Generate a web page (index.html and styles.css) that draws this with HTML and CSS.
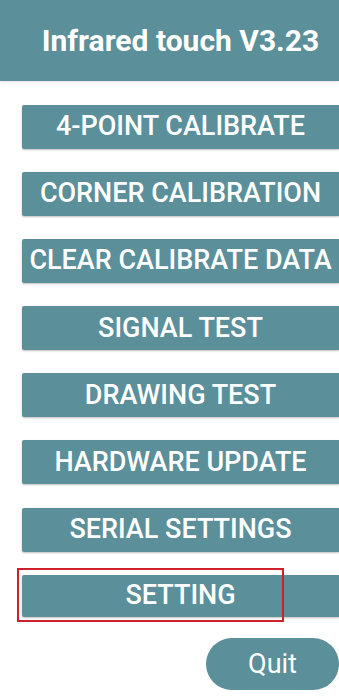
FILE: index.html
```html
<!DOCTYPE html>
<html lang="en">
<head>
    <meta charset="UTF-8">
    <meta name="viewport" content="width=device-width, initial-scale=1.0">
    <title>Infrared touch</title>
    <link rel="stylesheet" href="styles.css">
</head>
<body>
    <div class="header">
        <h1>Infrared touch V3.23</h1>
    </div>

    <div class="menu">
        <button class="menu-btn">4-POINT CALIBRATE</button>
        <button class="menu-btn">CORNER CALIBRATION</button>
        <button class="menu-btn">CLEAR CALIBRATE DATA</button>
        <button class="menu-btn">SIGNAL TEST</button>
        <button class="menu-btn">DRAWING TEST</button>
        <button class="menu-btn">HARDWARE UPDATE</button>
        <button class="menu-btn">SERIAL SETTINGS</button>
        <div class="highlight-wrap">
            <button class="menu-btn last">SETTING</button>
            <span class="highlight"></span>
        </div>
    </div>

    <div class="footer">
        <button class="quit-btn">Quit</button>
    </div>
</body>
</html>
```

FILE: styles.css
```css
body {
    font-family: Roboto, "Noto Sans", Arial, sans-serif;
    background-color: #ffffff;
    margin: 0;
    width: 339px;
    overflow: hidden;
}
.header {
    height: 81px;
    background-color: #5b8f9a;
    display: flex;
    align-items: center;
    justify-content: center;
    padding-left: 22px;
    box-shadow: 0 1px 2px rgba(0, 0, 0, 0.12);
}
.header h1 {
    margin: 0;
    color: #ffffff;
    font-size: 30px;
    font-weight: 700;
    line-height: 1;
}
.menu {
    display: flex;
    flex-direction: column;
    gap: 23.2px;
    padding: 23.5px 0 0 22px;
}
.menu-btn {
    display: block;
    width: 100%;
    height: 44px;
    margin: 0;
    padding: 0;
    border: none;
    border-radius: 2px 0 0 2px;
    background-color: #5b8f9a;
    color: #ffffff;
    font-family: inherit;
    font-size: 27px;
    font-weight: 500;
    line-height: 1;
    text-align: center;
    box-shadow: 0 1px 2px rgba(0, 0, 0, 0.25);
    cursor: pointer;
}
.menu-btn.last {
    height: 42px;
}
.highlight-wrap {
    position: relative;
}
.highlight {
    position: absolute;
    left: -5px;
    top: -7px;
    width: 263px;
    height: 50px;
    border: 2px solid #d0202c;
    pointer-events: none;
}
.footer {
    display: flex;
    justify-content: flex-end;
    padding-top: 21px;
}
.quit-btn {
    width: 133px;
    height: 52px;
    padding: 2px 0 0;
    border: none;
    border-radius: 26px;
    background-color: #5b8f9a;
    color: #ffffff;
    font-family: inherit;
    font-size: 27px;
    font-weight: 400;
    line-height: 1;
    cursor: pointer;
}
```
